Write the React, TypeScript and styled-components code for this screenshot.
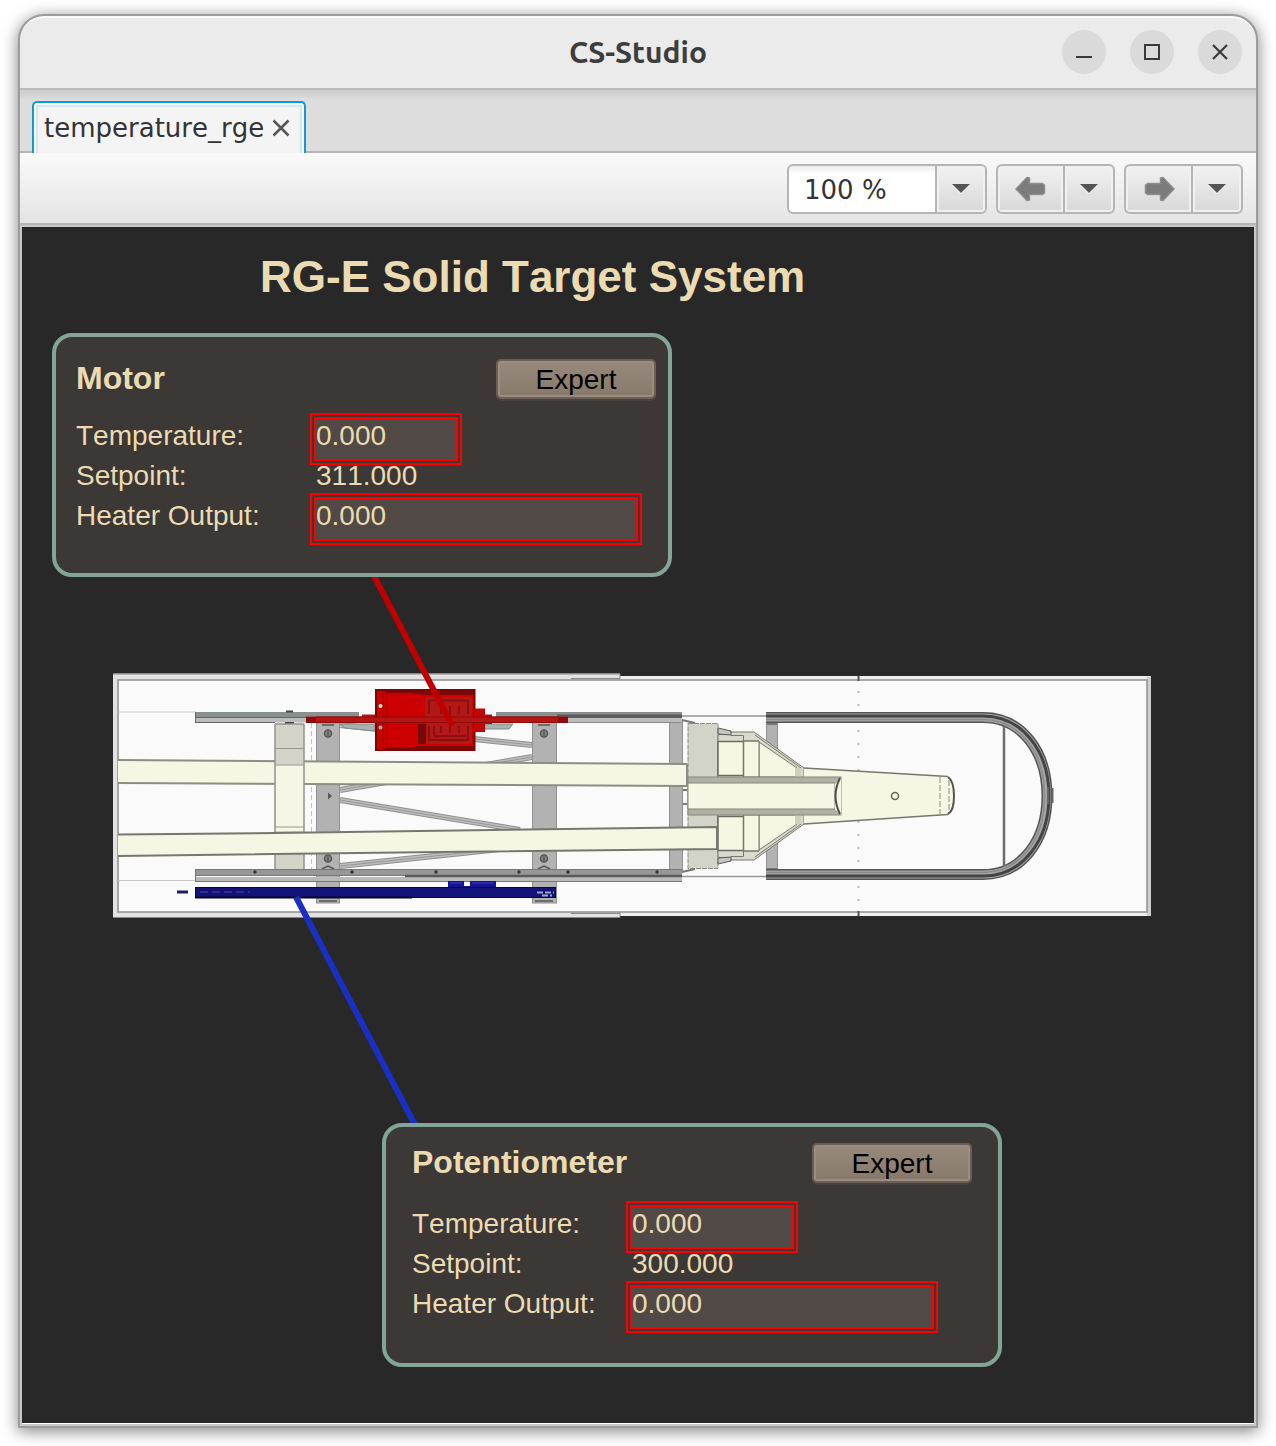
import React from "react";
import styled, { createGlobalStyle } from "styled-components";

const color = {
  canvas: "#282828",
  panel: "#3c3836",
  panelBorder: "#83a598",
  text: "#ebdbb2",
  field: "#504945",
  alarm: "#ff0000",
  line: "#b5b5b5",
};

const GlobalStyle = createGlobalStyle`
  *, *::before, *::after { box-sizing: border-box; }
  body { margin: 0; background: #ffffff; }
  button, input, select { font: inherit; color: inherit; margin: 0; font-kerning: inherit; }
`;

/* ---------- window frame ---------- */

const Window = styled.main`
  margin: 14px 18px 18px;
  border: 2px solid #9c9c9c;
  border-radius: 26px 26px 0 0;
  overflow: hidden;
  background: #c8c8c8;
  box-shadow: 0 3px 16px rgba(0, 0, 0, 0.5);
  font-family: "DejaVu Sans", sans-serif;
  font-size: 26px;
  font-kerning: none;
  color: #333333;
`;

const TitleBar = styled.header`
  display: grid;
  grid-template-columns: 1fr auto 1fr;
  align-items: center;
  height: 74px;
  padding: 0 14px 2px;
  background: #ebebeb;
  border-top: 2px solid #fafafa;
  border-bottom: 2px solid #b9b9b9;
  border-radius: 24px 24px 0 0;
`;

const WindowTitle = styled.div`
  grid-column: 2;
  font-family: Ubuntu, "Noto Sans", sans-serif;
  font-size: 30px;
  font-weight: 700;
  line-height: 36px;
  color: #3d3d3d;
`;

const WindowButtons = styled.div`
  display: flex;
  justify-content: flex-end;
  gap: 24px;
`;

const RoundButton = styled.button`
  display: grid;
  place-items: center;
  width: 44px;
  height: 44px;
  padding: 0;
  border: 0;
  border-radius: 50%;
  background: #dadada;
`;

const TabBar = styled.div`
  display: flex;
  align-items: flex-end;
  height: 63px;
  padding: 0 12px;
  background: linear-gradient(#cccccc, #dddddd 10px);
  box-shadow: inset 0 -2px 0 ${color.line};
`;

const Tab = styled.div`
  display: flex;
  align-items: center;
  gap: 8px;
  height: 52px;
  padding: 0 14px 0 10px;
  border: 2px solid #0f9bcf;
  border-bottom: 0;
  border-radius: 5px 5px 0 0;
  background: #f4f4f4;
  box-shadow: inset 0 2px 0 #f8fbfc, inset 2px 0 0 #f8fbfc, inset -2px 0 0 #f8fbfc,
    inset 0 4px 0 #d5e8f0, inset 4px 0 0 #d5e8f0, inset -4px 0 0 #d5e8f0;
  line-height: 32px;
`;

const TabClose = styled.button`
  display: flex;
  padding: 0;
  border: 0;
  background: none;
`;

/* ---------- tool bar ---------- */

const ToolBar = styled.div`
  display: flex;
  justify-content: flex-end;
  align-items: center;
  gap: 9px;
  height: 72px;
  padding: 2px 13px 0;
  background: linear-gradient(#fafafa, #e4e4e4);
  border-bottom: 2px solid ${color.line};
`;

const Group = styled.div`
  display: flex;
  height: 50px;
  border: 2px solid ${color.line};
  border-radius: 6px;
  overflow: hidden;
  background: ${color.line};
  gap: 2px;
`;

const ToolButton = styled.button<{ $width: number }>`
  display: grid;
  place-items: center;
  width: ${(p) => p.$width}px;
  padding: 0;
  border: 2px solid #f0f0f0;
  background: linear-gradient(#f0f0f0, #d9d9d9);
`;

const ZoomBox = styled.div`
  display: grid;
  grid-template-columns: 148px 48px;
  height: 50px;
  border: 2px solid ${color.line};
  border-radius: 6px;
  overflow: hidden;
  background: linear-gradient(#ececec, #ffffff 8px);
`;

const ZoomSelect = styled.select`
  grid-area: 1 / 1 / 2 / 3;
  appearance: none;
  border: 0;
  padding: 2px 60px 0 15px;
  background: none;
  line-height: 32px;
`;

const ZoomArrow = styled.span`
  grid-area: 1 / 2;
  display: grid;
  place-items: center;
  border: 2px solid #f0f0f0;
  box-shadow: -2px 0 0 ${color.line};
  background: linear-gradient(#f0f0f0, #d9d9d9);
  pointer-events: none;
`;

/* ---------- display canvas ---------- */

const Canvas = styled.section`
  margin: 2px;
  padding: 24px 30px 56px;
  border-bottom: 1px solid #ffffff;
  overflow: hidden;
  background: ${color.canvas};
  color: ${color.text};
  font-family: "Liberation Sans", Arial, sans-serif;
  font-size: 28px;
  line-height: 34px;
`;

const DisplayTitle = styled.h1`
  margin: 0 0 30px;
  padding-left: 208px;
  font-size: 44px;
  line-height: 52px;
`;

const Panel = styled.section<{ $indent?: number; $padding: string }>`
  width: 620px;
  margin-left: ${(p) => p.$indent ?? 0}px;
  padding: ${(p) => p.$padding};
  border: 4px solid ${color.panelBorder};
  border-radius: 20px;
  background: ${color.panel};
`;

const PanelHead = styled.div<{ $gap: number }>`
  display: flex;
  justify-content: space-between;
  margin-bottom: ${(p) => p.$gap}px;
`;

const PanelTitle = styled.h2`
  margin: 0;
  font-size: 32px;
  line-height: 38px;
`;

const ExpertButton = styled.button`
  width: 160px;
  height: 40px;
  padding: 2px 0 0;
  border: 2px solid #6c6056;
  border-radius: 5px;
  background: linear-gradient(#988a7b, #86796b);
  box-shadow: inset 0 0 0 2px #9c8d7f, 0 2px 0 #494340;
  color: #000000;
`;

const Readings = styled.div<{ $labelWidth: number }>`
  display: grid;
  grid-template-columns: ${(p) => p.$labelWidth}px 1fr;
  grid-auto-rows: 40px;
`;

const AlarmField = styled.input<{ $width: number }>`
  width: ${(p) => p.$width}px;
  height: 40px;
  padding: 0 0 6px;
  border: 0;
  background: ${color.field};
  box-shadow: 0 0 0 2px ${color.alarm}, 0 0 0 4px ${color.panel}, 0 0 0 6px ${color.alarm};
`;

const Value = styled.output`
  position: relative;
`;

const Assembly = styled.svg`
  display: block;
  margin-left: -30px;
`;

/* ---------- icons ---------- */

const Triangle = () => (
  <svg width="18" height="10" viewBox="0 0 18 10" aria-hidden="true">
    <path d="M0 1H18L9 10Z" fill="#ffffff" />
    <path d="M0 0H18L9 9Z" fill="#555555" />
  </svg>
);

const Arrow = ({ flip }: { flip?: boolean }) => (
  <svg width="32" height="28" viewBox="0 0 32 28" aria-hidden="true">
    <path
      transform={flip ? "matrix(-1 0 0 1 32 0)" : undefined}
      d="M1 14L12 2.500L14.500 3V8.500H27.500L29.500 10V18L27.500 19.500H14.500V25L12 25.500Z"
      fill="#7b7b7b"
      stroke="#8e8e8e"
      strokeWidth="1.500"
      strokeLinejoin="round"
    />
  </svg>
);

/* ---------- drawing of the target assembly ---------- */

const Brace = ({ d }: { d: string }) => (
  <g fill="none">
    <path d={d} stroke="#8f8f8f" strokeWidth="6" />
    <path d={d} stroke="#bdbdbd" strokeWidth="4" />
    <path d={d} stroke="#979797" strokeWidth="1" />
  </g>
);

const Post = ({ x, w, y, h }: { x: number; w: number; y: number; h: number }) => (
  <rect x={x + 0.5} y={y} width={w - 1} height={h} fill="#b2b2b2" stroke="#909090" />
);

const bolts = [255, 352, 436, 519, 568, 657];

const NoseHalf = () => (
  <g stroke="#77776e" strokeWidth="1">
    <path d="M718 735L730 732H754L804 768V796H718Z" fill="#d9dacb" />
    <path d="M718 728L731 731V735L718 734Z" fill="#c4c4c0" stroke="#555555" />
    <path d="M759 742L797 768V777H759Z" fill="#f5f6e4" />
    <path d="M743.500 741H759V777H743.500Z" fill="#f5f6e4" />
    <rect x="718" y="741.500" width="25.500" height="34" fill="#f5f6e4" stroke="#6c6c64" strokeWidth="1.500" />
    <path d="M731 735.500H743.500V775M755 735L801 768M743 741H759" fill="none" />
    <path d="M795 768H801V778H795Z" fill="#cfd0c0" stroke="none" />
  </g>
);

const loop = "M766 717.500H983C1022 717.500 1047 752 1047 796S1022 874.500 983 874.500H766";

const AssemblyDrawing = () => (
  <Assembly width="1232" height="546" viewBox="22 577 1232 546" role="img" aria-label="Solid target assembly">
    {/* housing */}
    <path d="M113 673.500H620V676H1151V916H620V918H113Z" fill="#e2e2e2" />
    <path d="M620 676H1146V680H620ZM620 912H1146V916H620Z" fill="#eeeeee" />
    <path d="M1147 677H1151V916H1147Z" fill="#cfcfcf" />
    <rect x="118" y="680" width="1029" height="232" fill="#fafafa" stroke="#8f8f8f" strokeWidth="1.500" />
    <path d="M113 674H620V679M113 917.500H620V912M571 678.500H620M571 913.500H620" fill="none" stroke="#8a8a8a" />
    <path d="M118 712H196M118 880.500H196" stroke="#c9c9c9" />
    <path d="M682 716H766M682 876.500H766" stroke="#969696" strokeWidth="1.500" />
    <path d="M858.500 678V912" stroke="#b9b9b9" strokeWidth="2" strokeDasharray="2 11" />
    <path d="M858.500 676V681M858.500 911V916" stroke="#555555" strokeWidth="2" />
    <path d="M311.500 723V869" stroke="#c2c2c2" strokeDasharray="5 3" />

    {/* frame */}
    <Brace d="M340 725L532 745" />
    <Brace d="M340 790L532 757" />
    <Brace d="M340 800L520 830" />
    <Brace d="M340 866L500 849" />
    <Post x={316} w={24} y={723} h={180} />
    <Post x={532} w={25} y={722} h={181} />
    <Post x={669} w={14} y={720} h={152} />
    <Post x={766} w={12} y={716} h={160} />
    <rect x="767" y="718" width="10" height="7" fill="#777777" />
    <rect x="767" y="868" width="10" height="7" fill="#777777" />
    {[328, 544].map((x) => (
      <g key={x} fill="#888888" stroke="#555555" strokeWidth="1.500">
        <circle cx={x} cy="733.500" r="3.500" />
        <circle cx={x} cy="858.500" r="3.500" />
        <path d={`M${x} 731V736M${x} 856V861M${x - 6} 725H${x + 6}M${x - 6} 869L${x} 866L${x + 6} 869M${x - 9} 901H${x + 9}`} fill="none" />
      </g>
    ))}
    <path d="M328 792.500L332 796L328 799.500Z" fill="#555555" />

    {/* upper rail */}
    <path d="M195 712H359V717H195ZM496 712H682V717H496Z" fill="#899090" />
    <path d="M195 718H682V722.500H195Z" fill="#bcbcbc" />
    <path d="M195 717.500H682M195.500 712V723M195 722.500H275" stroke="#666666" fill="none" />
    <path d="M557 716H682" stroke="#5a5a5a" strokeWidth="3" />
    <path d="M557 712.500H682M557 722.500H682" stroke="#8a8a8a" />
    <path d="M340 724H375V731L345 728ZM485 724H513L509 729H485Z" fill="#a9b0b0" stroke="#858a8a" />
    <path d="M286 711.500H293M285 723H294" stroke="#444444" strokeWidth="2" />

    {/* lower rail */}
    <path d="M195 869H682V875H195Z" fill="#979797" />
    <path d="M195 877H682V881.500H195Z" fill="#bababa" />
    <path d="M195 875.500H682M195 869.500H682M195.500 869V882M195 881.500H682" stroke="#777777" fill="none" />
    <path d="M405 876H682" stroke="#5a5a5a" strokeWidth="2.500" />
    {bolts.map((x) => (
      <circle key={x} cx={x} cy="872" r="1.700" fill="#333333" />
    ))}

    {/* beams */}
    <path d="M118 760L687 764V786L118 783Z" fill="#f5f6e4" />
    <path d="M118 760L687 764M118 783L687 786M687 764V786" stroke="#8d8d84" strokeWidth="2" />
    <rect x="275" y="724" width="29" height="145" fill="#d3d4c7" />
    <rect x="275" y="765" width="29" height="66" fill="#f5f6e4" />
    <path d="M275 748.500H304M275 765H304M275 827H304" stroke="#999990" />
    <path d="M275 724V869M304 724V869M275 724H304" stroke="#93938a" strokeWidth="1.500" />
    <rect x="688" y="723.500" width="30" height="145" fill="#d3d4c8" stroke="#8d8d84" strokeDasharray="5 1" />
    <path d="M682 720L695 723M682 872L695 869M683 790H687M683 804H687" stroke="#777777" strokeWidth="2" />

    {/* nose */}
    <NoseHalf />
    <g transform="matrix(1 0 0 -1 0 1592)">
      <NoseHalf />
    </g>
    <path d="M804 768L948 776.500Q955 780 955 796T948 814.500L804 824Z" fill="#f5f6e4" />
    <path d="M804 768L948 776.500M804 824L948 814.500" stroke="#77776e" strokeWidth="1.500" />
    <path d="M948 777Q954 781 954 796T948 814" fill="none" stroke="#555550" strokeWidth="2" />
    <path d="M940 777V814M949 780V812" stroke="#8d8d84" strokeDasharray="6 2" />
    <circle cx="895" cy="796" r="3.500" fill="#f5f6e4" stroke="#666660" strokeWidth="1.500" />
    <path d="M801 778H838V814H801Z" fill="#f5f6e4" />
    <rect x="688" y="777" width="153" height="38" fill="#b0b1a3" stroke="#85867b" />
    <path d="M688 783H835V809H688Z" fill="#f5f6e4" stroke="#85867b" />
    <path d="M835 784L841 778V815L835 809Z" fill="#f5f6e4" />
    <path d="M840 778Q831 796 840 814" fill="none" stroke="#4e4e49" strokeWidth="2" />
    <path d="M118 834L717 827V849L118 856Z" fill="#f5f6e4" />
    <path d="M118 834.500L275 833L717 827V849L440 852L118 856" fill="none" stroke="#77776e" strokeWidth="2" />

    {/* end loop */}
    <g fill="none">
      <path d={loop} stroke="#555555" strokeWidth="11" />
      <path d={loop} stroke="#a6a6a6" strokeWidth="8" />
      <path d="M766 716H983C1023 716 1049 752 1049 796S1023 876 983 876H766" stroke="#444444" strokeWidth="3" />
      <path d="M766 719.500H983C1020 719.500 1044.500 752 1044.500 796S1020 872.500 983 872.500H766" stroke="#8a8a8a" strokeWidth="1.500" />
      <path d="M1004 726V866" stroke="#6c6c6c" strokeWidth="2.500" />
      <path d="M1048 787V804M1052.500 788V803" stroke="#666666" strokeWidth="2" />
    </g>

    {/* motor */}
    <path d="M306 716.500H362V714.500H492V716.500H568V722.500H306Z" fill="#b81414" />
    <rect x="306" y="717" width="10" height="6" fill="#8a0c0c" />
    <rect x="558" y="717" width="10" height="6" fill="#8a0c0c" />
    <rect x="376" y="690" width="98.500" height="60" fill="#cc0000" stroke="#7a0505" strokeWidth="2" />
    <path d="M425 697H472V744H425Z" fill="#b31818" />
    <path d="M385 691H474V695H425L412 693H385ZM385 749H474V746H418L412 747.500H385Z" fill="#7d0808" />
    <path d="M418 724H426V744H418Z" fill="#7a0707" />
    <path d="M474 708.500H485V715H492V724H485V732H474Z" fill="#c00606" />
    <path d="M383 692V748M387 692V748" stroke="#9e0505" />
    <g fill="none" stroke="#8c0e0e" strokeWidth="2">
      <path d="M429 714V700.500H468V714M441 714V706M450 714V706M459 714V706" />
      <path d="M429 726V740H468V726M434 726V736H465M441 726V733M450 726V733M459 726V733" />
    </g>
    <path d="M316 717.500H558V722.500H316Z" fill="#b81414" />
    <path d="M316 717H558M316 722.500H558" stroke="#8a0c0c" />
    <circle cx="380.500" cy="706" r="2" fill="#f0dede" />
    <circle cx="380.500" cy="727.500" r="2" fill="#9fb0b0" />

    {/* potentiometer */}
    <path d="M448 881H464V886H470V881H496V891H448Z" fill="#15158f" />
    <path d="M450 883H462M472 883H493" stroke="#2626bb" strokeWidth="2" />
    <rect x="195.500" y="887.500" width="360" height="10" fill="#121278" stroke="#08083f" />
    <path d="M200 892H250" stroke="#30307c" strokeWidth="2" strokeDasharray="8 4" />
    <path d="M195 897.500H412" stroke="#060628" strokeWidth="2" />
    <path d="M537 892.500H554M542 895.500H552" stroke="#a3a3c0" strokeWidth="2" strokeDasharray="6 2" />
    <path d="M177 892H188" stroke="#1c1c66" strokeWidth="3" />

    {/* pointers */}
    <path d="M373.500 575L452.500 726" stroke="#bf0000" strokeWidth="6" />
    <path d="M296 897L415 1125" stroke="#1a2fc4" strokeWidth="6" />
  </Assembly>
);

/* ---------- panels ---------- */

type DeviceProps = {
  id: string;
  name: string;
  setpoint: string;
  indent?: number;
  padding: string;
  headGap: number;
  labelWidth: number;
  temperatureWidth: number;
  heaterWidth: number;
};

const DevicePanel = (p: DeviceProps) => (
  <Panel $indent={p.indent} $padding={p.padding}>
    <PanelHead $gap={p.headGap}>
      <PanelTitle>{p.name}</PanelTitle>
      <ExpertButton type="button">Expert</ExpertButton>
    </PanelHead>
    <Readings $labelWidth={p.labelWidth}>
      <label htmlFor={`${p.id}-temperature`}>Temperature:</label>
      <AlarmField id={`${p.id}-temperature`} $width={p.temperatureWidth} value="0.000" readOnly />
      <label htmlFor={`${p.id}-setpoint`}>Setpoint:</label>
      <Value id={`${p.id}-setpoint`}>{p.setpoint}</Value>
      <label htmlFor={`${p.id}-heater`}>Heater Output:</label>
      <AlarmField id={`${p.id}-heater`} $width={p.heaterWidth} value="0.000" readOnly />
    </Readings>
  </Panel>
);

export default function App() {
  return (
    <>
      <GlobalStyle />
      <Window>
        <TitleBar>
          <WindowTitle>CS-Studio</WindowTitle>
          <WindowButtons>
            <RoundButton type="button" aria-label="Minimize">
              <svg width="16" height="16" viewBox="0 0 16 16"><path d="M0 13H16" stroke="#3a3a3a" strokeWidth="2" /></svg>
            </RoundButton>
            <RoundButton type="button" aria-label="Maximize">
              <svg width="16" height="16" viewBox="0 0 16 16"><path d="M1 1H15V15H1Z" fill="none" stroke="#3a3a3a" strokeWidth="2" /></svg>
            </RoundButton>
            <RoundButton type="button" aria-label="Close">
              <svg width="16" height="16" viewBox="0 0 16 16"><path d="M1 1L15 15M15 1L1 15" stroke="#3a3a3a" strokeWidth="2.200" /></svg>
            </RoundButton>
          </WindowButtons>
        </TitleBar>
        <TabBar>
          <Tab>
            <span>temperature_rge</span>
            <TabClose type="button" aria-label="Close tab">
              <svg width="18" height="18" viewBox="0 0 18 18"><path d="M1.500 1.500L16.500 16.500M16.500 1.500L1.500 16.500" stroke="#555555" strokeWidth="2.500" /></svg>
            </TabClose>
          </Tab>
        </TabBar>
        <ToolBar>
          <ZoomBox>
            <ZoomSelect aria-label="Zoom" defaultValue="100 %">
              <option>100 %</option>
            </ZoomSelect>
            <ZoomArrow><Triangle /></ZoomArrow>
          </ZoomBox>
          <Group>
            <ToolButton type="button" $width={65} aria-label="Back"><Arrow /></ToolButton>
            <ToolButton type="button" $width={48} aria-label="Back history"><Triangle /></ToolButton>
          </Group>
          <Group>
            <ToolButton type="button" $width={65} aria-label="Forward"><Arrow flip /></ToolButton>
            <ToolButton type="button" $width={48} aria-label="Forward history"><Triangle /></ToolButton>
          </Group>
        </ToolBar>
        <Canvas>
          <DisplayTitle>RG-E Solid Target System</DisplayTitle>
          <DevicePanel
            id="motor"
            name="Motor"
            setpoint="311.000"
            padding="22px 12px 34px 20px"
            headGap={20}
            labelWidth={240}
            temperatureWidth={140}
            heaterWidth={320}
          />
          <AssemblyDrawing />
          <DevicePanel
            id="potentiometer"
            name="Potentiometer"
            setpoint="300.000"
            indent={330}
            padding="16px 26px 36px"
            headGap={24}
            labelWidth={220}
            temperatureWidth={160}
            heaterWidth={300}
          />
        </Canvas>
      </Window>
    </>
  );
}
